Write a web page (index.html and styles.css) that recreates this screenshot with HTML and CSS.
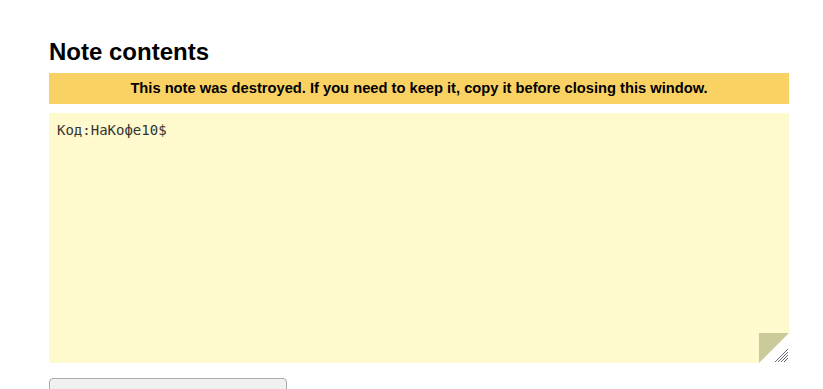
FILE: index.html
```html
<!DOCTYPE html>
<html lang="en">
<head>
    <meta charset="UTF-8">
    <title>Note contents</title>
    <link rel="stylesheet" href="styles.css">
</head>
<body>
    <div class="page">
        <h1 class="title">Note contents</h1>
        <div class="warning">This note was destroyed. If you need to keep it, copy it before closing this window.</div>
        <div class="note">
            <textarea class="note-text" readonly>Код:НаКофе10$</textarea>
            <div class="corner">
                <svg width="30" height="30" viewBox="0 0 30 30">
                    <polygon points="0,0 30,0 0,30" fill="#cbcb99"/>
                    <g stroke="#666" stroke-width="1">
                        <line x1="16" y1="29" x2="29" y2="16"/>
                        <line x1="19" y1="29" x2="29" y2="19"/>
                        <line x1="22" y1="29" x2="29" y2="22"/>
                        <line x1="25" y1="29" x2="29" y2="25"/>
                    </g>
                </svg>
            </div>
        </div>
        <button class="btn" type="button"></button>
    </div>
</body>
</html>
```

FILE: styles.css
```css
body {
    margin: 0;
    background: #fff;
    font-family: "Liberation Sans", Arial, sans-serif;
    overflow: hidden;
}

.page {
    width: 740px;
    padding: 38px 0 0 49px;
}

.title {
    margin: 0 0 7px 0;
    font-size: 24px;
    line-height: 28px;
    font-weight: bold;
    color: #000;
}

.warning {
    height: 31px;
    line-height: 31px;
    background: #fad264;
    text-align: center;
    font-size: 14.7px;
    font-weight: bold;
    color: #000;
}

.note {
    position: relative;
    margin-top: 9px;
    height: 250px;
    background: #fffacd;
}

.note-text {
    display: block;
    box-sizing: border-box;
    width: 100%;
    height: 100%;
    margin: 0;
    padding: 8px 8px;
    border: none;
    outline: none;
    resize: none;
    background: transparent;
    font-family: "DejaVu Sans Mono", "Liberation Mono", monospace;
    font-size: 14px;
    line-height: 18px;
    color: #333;
}

.corner {
    position: absolute;
    right: 0;
    bottom: 0;
    width: 30px;
    height: 30px;
    background: #fff;
}

.corner svg {
    display: block;
}

.btn {
    display: block;
    margin-top: 15px;
    width: 238px;
    height: 30px;
    background: #f0f0f0;
    border: 1px solid #aaa;
    border-radius: 4px;
}
```
